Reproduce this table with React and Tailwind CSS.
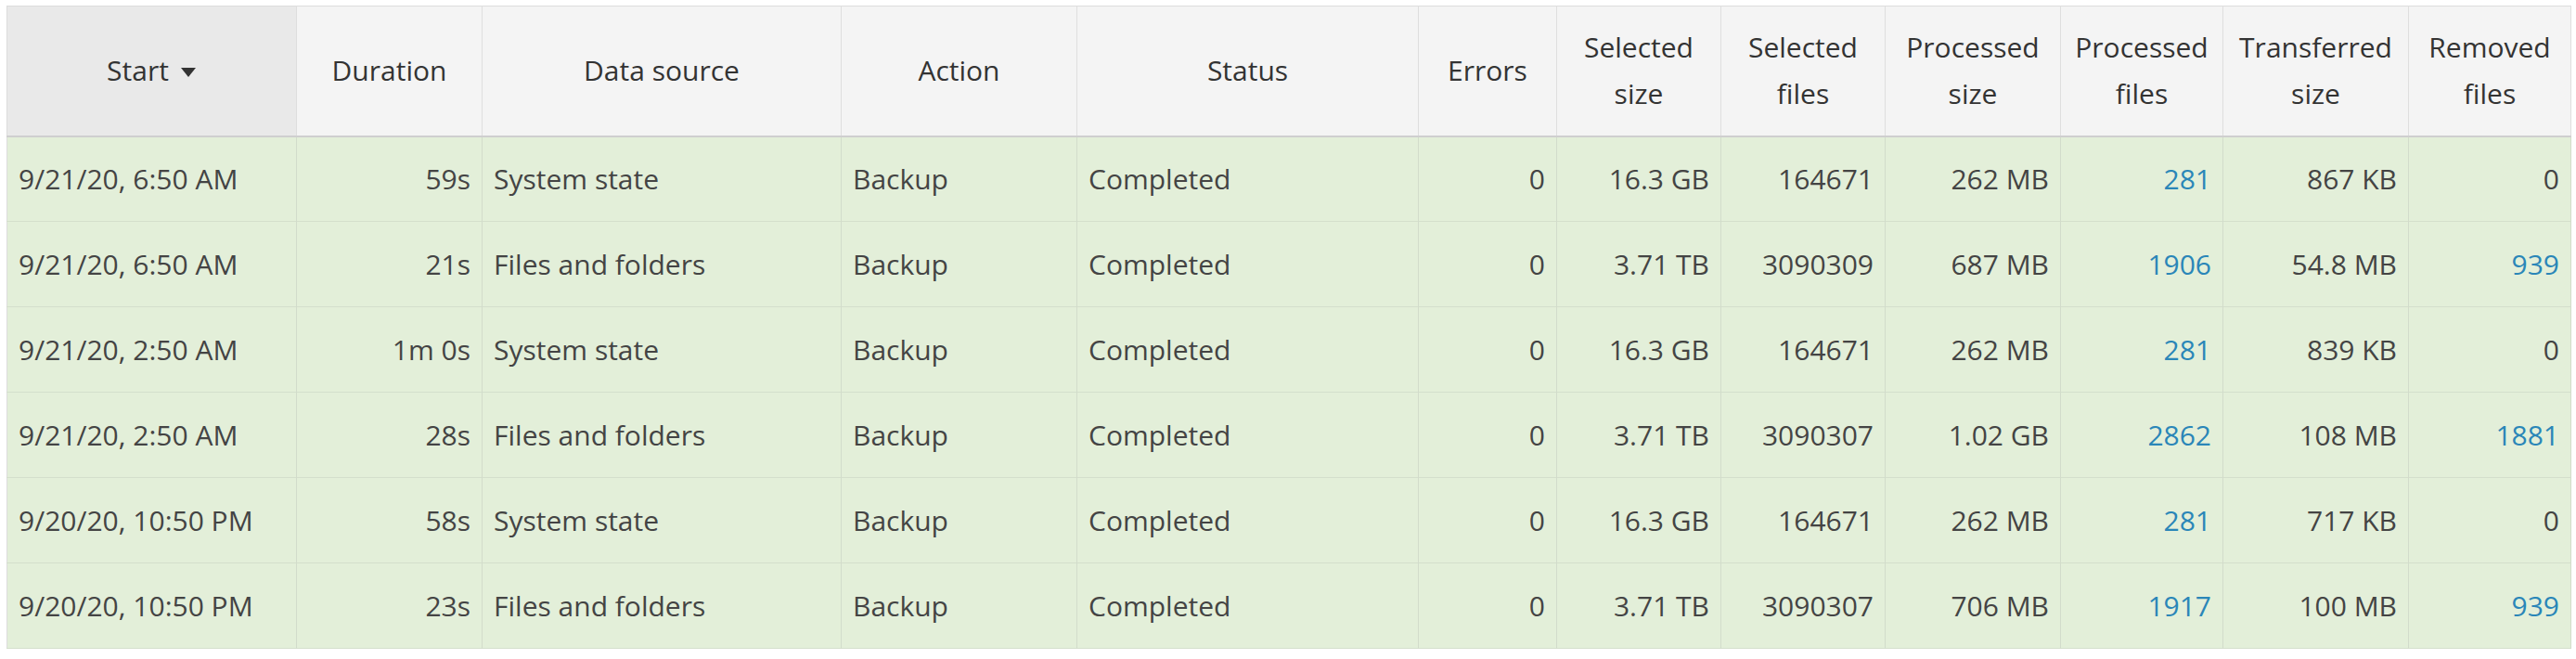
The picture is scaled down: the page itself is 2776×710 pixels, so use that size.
import React from 'react';

const columns = [
  { key: 'start', label: 'Start', width: 'w-[312px]', align: 'left', sorted: true },
  { key: 'duration', label: 'Duration', width: 'w-[200px]', align: 'right' },
  { key: 'source', label: 'Data source', width: 'w-[387px]', align: 'left' },
  { key: 'action', label: 'Action', width: 'w-[254px]', align: 'left' },
  { key: 'status', label: 'Status', width: 'w-[368px]', align: 'left' },
  { key: 'errors', label: 'Errors', width: 'w-[149px]', align: 'right' },
  { key: 'selSize', label: ['Selected', 'size'], width: 'w-[177px]', align: 'right' },
  { key: 'selFiles', label: ['Selected', 'files'], width: 'w-[177px]', align: 'right' },
  { key: 'procSize', label: ['Processed', 'size'], width: 'w-[189px]', align: 'right' },
  { key: 'procFiles', label: ['Processed', 'files'], width: 'w-[175px]', align: 'right', link: true },
  { key: 'trSize', label: ['Transferred', 'size'], width: 'w-[200px]', align: 'right' },
  { key: 'removed', label: ['Removed', 'files'], width: 'w-[175px]', align: 'right', link: true },
];

const rows = [
  ['9/21/20, 6:50 AM', '59s', 'System state', 'Backup', 'Completed', '0', '16.3 GB', '164671', '262 MB', '281', '867 KB', '0'],
  ['9/21/20, 6:50 AM', '21s', 'Files and folders', 'Backup', 'Completed', '0', '3.71 TB', '3090309', '687 MB', '1906', '54.8 MB', '939'],
  ['9/21/20, 2:50 AM', '1m 0s', 'System state', 'Backup', 'Completed', '0', '16.3 GB', '164671', '262 MB', '281', '839 KB', '0'],
  ['9/21/20, 2:50 AM', '28s', 'Files and folders', 'Backup', 'Completed', '0', '3.71 TB', '3090307', '1.02 GB', '2862', '108 MB', '1881'],
  ['9/20/20, 10:50 PM', '58s', 'System state', 'Backup', 'Completed', '0', '16.3 GB', '164671', '262 MB', '281', '717 KB', '0'],
  ['9/20/20, 10:50 PM', '23s', 'Files and folders', 'Backup', 'Completed', '0', '3.71 TB', '3090307', '706 MB', '1917', '100 MB', '939'],
];

const App = () => {
  return (
    <div className="w-[2776px] h-[710px] bg-white pt-[6px] pl-[7px] font-['Open_Sans',sans-serif] text-[30px]">
      <table className="table-fixed border-collapse border border-[#dcdcdc] w-[2763px]">
        <colgroup>
          {columns.map((col) => (
            <col key={col.key} className={col.width} />
          ))}
        </colgroup>
        <thead>
          <tr className="h-[140px] border-b-2 border-[#cfcfcf]">
            {columns.map((col) => (
              <th
                key={col.key}
                className={`font-normal text-[#333] text-center leading-[50px] border-r border-[#dedede] px-2 ${
                  col.sorted ? 'bg-[#e9e9e9]' : 'bg-[#f4f4f4]'
                }`}
              >
                {Array.isArray(col.label) ? (
                  <>
                    {col.label[0]}
                    <br />
                    {col.label[1]}
                  </>
                ) : (
                  <span className="inline-flex items-center gap-3">
                    {col.label}
                    {col.sorted && (
                      <svg width="18" height="12" viewBox="0 0 18 12" className="mt-1">
                        <path d="M1 1h16L9 11z" fill="#333" />
                      </svg>
                    )}
                  </span>
                )}
              </th>
            ))}
          </tr>
        </thead>
        <tbody>
          {rows.map((row, i) => (
            <tr key={i} className="h-[92px] bg-[#e3efd9] border-b border-[#d4dfcc]">
              {row.map((cell, j) => {
                const col = columns[j];
                return (
                  <td
                    key={col.key}
                    className={`px-3 border-r border-[#d2dccb] whitespace-nowrap ${
                      col.align === 'right' ? 'text-right' : 'text-left'
                    } ${col.link && cell !== '0' ? 'text-[#2a86b8]' : 'text-[#444]'}`}
                  >
                    {cell}
                  </td>
                );
              })}
            </tr>
          ))}
        </tbody>
      </table>
    </div>
  );
};

export default App;
